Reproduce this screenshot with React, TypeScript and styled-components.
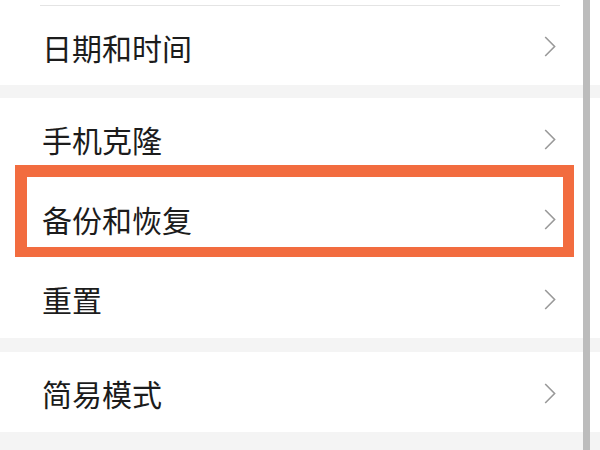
import React from "react"
import styled, { createGlobalStyle } from "styled-components"

const Global = createGlobalStyle`
  html, body {
    margin: 0;
    padding: 0;
    background: #ffffff;
    font-family: "Noto Sans CJK SC", "Noto Sans", sans-serif;
  }
`

const Page = styled.div`
  position: relative;
  width: 600px;
  height: 450px;
  overflow: hidden;
  background: #ffffff;
  padding-top: 5px;
  box-sizing: border-box;
`

const TopLine = styled.div`
  height: 1px;
  margin: 0 40px 0 40px;
  background: #e4e4e4;
`

const Group = styled.div`
  background: #ffffff;
`

const Gap = styled.div<{ $h: number }>`
  height: ${(p) => p.$h}px;
  background: #f4f4f4;
`

const Row = styled.div<{ $h?: number }>`
  position: relative;
  height: ${(p) => p.$h ?? 80}px;
  display: flex;
  align-items: center;
  justify-content: space-between;
  padding: 2px 44px 0 42px;
  box-sizing: border-box;
`

const Label = styled.span`
  font-size: 30px;
  line-height: 1;
  color: #1c1c1c;
`

const Highlight = styled.div`
  position: absolute;
  top: -13px;
  bottom: 1px;
  left: 15px;
  right: 26px;
  border: 11px solid #f26c3f;
  border-left-width: 12px;
  border-top-width: 12px;
  border-bottom-width: 10px;
  box-sizing: border-box;
  pointer-events: none;
`

const Scrollbar = styled.div`
  position: absolute;
  top: 0;
  bottom: 0;
  right: 10px;
  width: 7px;
  background: #bcbcbc;
`

const Chevron = () => (
  <svg width="12" height="21" viewBox="0 0 12 21">
    <path d="M1.2 1 L10.6 10.5 L1.2 20" fill="none" stroke="#999999" strokeWidth="1.6" />
  </svg>
)

const Item = ({ label, marked, h }: { label: string; marked?: boolean; h?: number }) => (
  <Row $h={h}>
    <Label>{label}</Label>
    <Chevron />
    {marked ? <Highlight /> : null}
  </Row>
)

export default function App() {
  return (
    <Page>
      <Global />
      <TopLine />
      <Group>
        <Item label="日期和时间" h={79} />
      </Group>
      <Gap $h={13} />
      <Group>
        <Item label="手机克隆" />
        <Item label="备份和恢复" marked />
        <Item label="重置" />
      </Group>
      <Gap $h={14} />
      <Group>
        <Item label="简易模式" />
      </Group>
      <Gap $h={20} />
      <Scrollbar />
    </Page>
  )
}
